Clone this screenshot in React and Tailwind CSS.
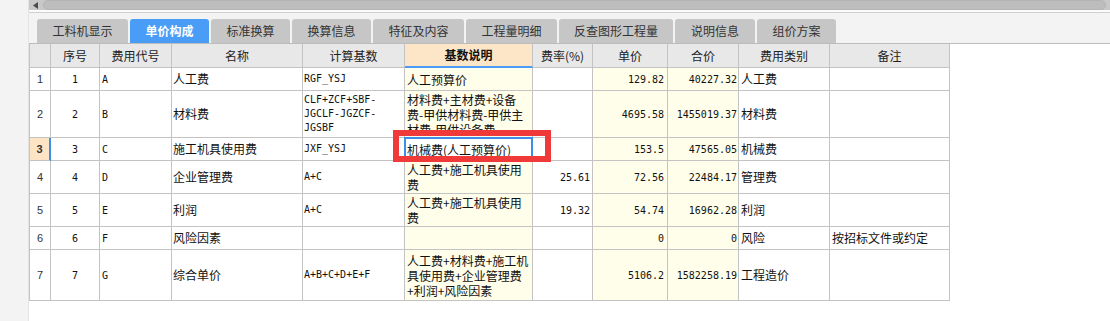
import React from "react";

const W = [
  "w-[21px]",
  "w-[49px]",
  "w-[72px]",
  "w-[131px]",
  "w-[102px]",
  "w-[128px]",
  "w-[60px]",
  "w-[75px]",
  "w-[71px]",
  "w-[91px]",
  "w-[120px]",
];

const headers = ["", "序号", "费用代号", "名称", "计算基数", "基数说明", "费率(%)", "单价", "合价", "费用类别", "备注"];

const rows = [
  { n: "1", code: "A", name: "人工费", base: ["RGF_YSJ"], desc: ["人工预算价"], rate: "", price: "129.82", total: "40227.32", type: "人工费", note: "", h: "h-[23px]" },
  { n: "2", code: "B", name: "材料费", base: ["CLF+ZCF+SBF-", "JGCLF-JGZCF-", "JGSBF"], desc: ["材料费+主材费+设备", "费-甲供材料费-甲供主", "材费-甲供设备费"], rate: "", price: "4695.58", total: "1455019.37", type: "材料费", note: "", h: "h-[47px]" },
  { n: "3", code: "C", name: "施工机具使用费", base: ["JXF_YSJ"], desc: ["机械费(人工预算价)"], rate: "", price: "153.5", total: "47565.05", type: "机械费", note: "", h: "h-[23px]", sel: true },
  { n: "4", code: "D", name: "企业管理费", base: ["A+C"], desc: ["人工费+施工机具使用", "费"], rate: "25.61", price: "72.56", total: "22484.17", type: "管理费", note: "", h: "h-[33px]" },
  { n: "5", code: "E", name: "利润", base: ["A+C"], desc: ["人工费+施工机具使用", "费"], rate: "19.32", price: "54.74", total: "16962.28", type: "利润", note: "", h: "h-[33px]" },
  { n: "6", code: "F", name: "风险因素", base: [], desc: [], rate: "", price: "0", total: "0", type: "风险", note: "按招标文件或约定", h: "h-[23px]" },
  { n: "7", code: "G", name: "综合单价", base: ["A+B+C+D+E+F"], desc: ["人工费+材料费+施工机", "具使用费+企业管理费", "+利润+风险因素"], rate: "", price: "5106.2", total: "1582258.19", type: "工程造价", note: "", h: "h-[51px]" },
];

const tabs = [
  { t: "工料机显示", w: "w-[91px]" },
  { t: "单价构成", w: "w-[79px]", active: true },
  { t: "标准换算", w: "w-[79px]" },
  { t: "换算信息", w: "w-[79px]" },
  { t: "特征及内容", w: "w-[91px]" },
  { t: "工程量明细", w: "w-[91px]" },
  { t: "反查图形工程量", w: "w-[114px]" },
  { t: "说明信息", w: "w-[80px]" },
  { t: "组价方案", w: "w-[79px]" },
];

const cellBase = "shrink-0 flex items-center border-r border-b border-[#c3c3c3] overflow-hidden whitespace-nowrap";
const mono = "font-['DejaVu_Sans_Mono',monospace] text-[10px] text-[#111]";
const cjk = "font-['Noto_Sans_CJK_SC',sans-serif] text-[12px] text-[#111]";
const yellow = "bg-[#fffeea]";

function Lines({ lines, lead }) {
  return (
    <div className={lead}>
      {lines.map((l, i) => (
        <div key={i}>{l}</div>
      ))}
    </div>
  );
}

export default function App() {
  return (
    <div className="relative w-[1110px] h-[321px] flex bg-white overflow-hidden font-['Noto_Sans_CJK_SC',sans-serif]">
      {/* left strip */}
      <div className="w-[29px] h-full shrink-0 bg-[#f3f3f3] border-r border-[#e4e4e4]" />

      <div className="flex-1 flex flex-col">
        {/* scrollbar */}
        <div className="h-[10px] bg-[#c8c8c8] flex items-center relative">
          <svg width="6" height="7" viewBox="0 0 6 7" className="ml-[4px] shrink-0">
            <polygon points="5,0 5,7 0,3.5" fill="#4a4a4a" />
          </svg>
          <div className="ml-[4px] mr-[4px] h-[10px] flex-1 rounded-full bg-[#bdbdbd] border border-[#b4b4b4]" />
        </div>
        <div className="h-[2px] bg-[#fbfbfb]" />
        <div className="h-[1px] bg-[#cfcfcf]" />

        {/* tab bar */}
        <div className="h-[31px] bg-[#f3f3f3] border-b border-[#bcbcbc] flex items-end pl-[8px] gap-[2px]">
          {tabs.map((t) => (
            <div
              key={t.t}
              className={
                t.w +
                " h-[24px] rounded-t-[3px] flex items-center justify-center text-[12px] " +
                (t.active ? "bg-[#4a9df7] text-white font-bold" : "bg-[#c6c6c6] text-[#333]")
              }
            >
              {t.t}
            </div>
          ))}
        </div>

        {/* table */}
        <div className="flex flex-col border-l border-[#c3c3c3] w-[921px]">
          {/* header */}
          <div className="flex h-[24px]">
            {headers.map((h, i) => (
              <div
                key={i}
                className={
                  cellBase +
                  " " +
                  W[i] +
                  " justify-center " +
                  cjk +
                  (i === 5 ? " bg-[#fde6c8] font-bold border-b-2 border-b-[#4a9cf8]" : " bg-[#e8e8e8] text-[#222]")
                }
              >
                {h}
              </div>
            ))}
          </div>

          {rows.map((r) => (
            <div key={r.n} className={"flex " + r.h}>
              <div
                className={
                  cellBase +
                  " " +
                  W[0] +
                  " justify-center font-['Liberation_Sans',sans-serif] text-[11px] text-[#333] " +
                  (r.sel ? "bg-[#fde4c4] font-bold border-r-2 border-r-[#3b8fe8]" : "bg-white")
                }
              >
                {r.n}
              </div>
              <div className={cellBase + " " + W[1] + " justify-center " + mono}>{r.n}</div>
              <div className={cellBase + " " + W[2] + " pl-[2px] " + mono}>{r.code}</div>
              <div className={cellBase + " " + W[3] + " pl-[1px] " + cjk}>{r.name}</div>
              <div className={cellBase + " " + W[4] + " pl-[1px] " + mono}>
                <Lines lines={r.base} lead="leading-[14px]" />
              </div>
              <div
                className={
                  cellBase + " " + W[5] + " pl-[2px] relative " + cjk + " " + (r.sel ? "bg-white overflow-visible" : yellow)
                }
              >
                <Lines lines={r.desc} lead="leading-[15px]" />
                {r.sel && (
                  <div className="absolute left-[-1px] top-[-1px] right-[-1px] bottom-[-1px] border-2 border-[#3b8fe8] pointer-events-none" />
                )}
              </div>
              <div className={cellBase + " " + W[6] + " justify-end pr-[2px] bg-white " + mono}>{r.rate}</div>
              <div className={cellBase + " " + W[7] + " justify-end pr-[3px] " + yellow + " " + mono}>{r.price}</div>
              <div className={cellBase + " " + W[8] + " justify-end pr-[1px] " + yellow + " " + mono}>{r.total}</div>
              <div className={cellBase + " " + W[9] + " pl-[2px] " + cjk}>{r.type}</div>
              <div className={cellBase + " " + W[10] + " pl-[2px] " + cjk}>{r.note}</div>
            </div>
          ))}
        </div>
      </div>

      {/* red annotation box */}
      <div className="absolute left-[393px] top-[130px] w-[158px] h-[32px] border-[6px] border-[#f03a3a] pointer-events-none z-10" />
    </div>
  );
}
